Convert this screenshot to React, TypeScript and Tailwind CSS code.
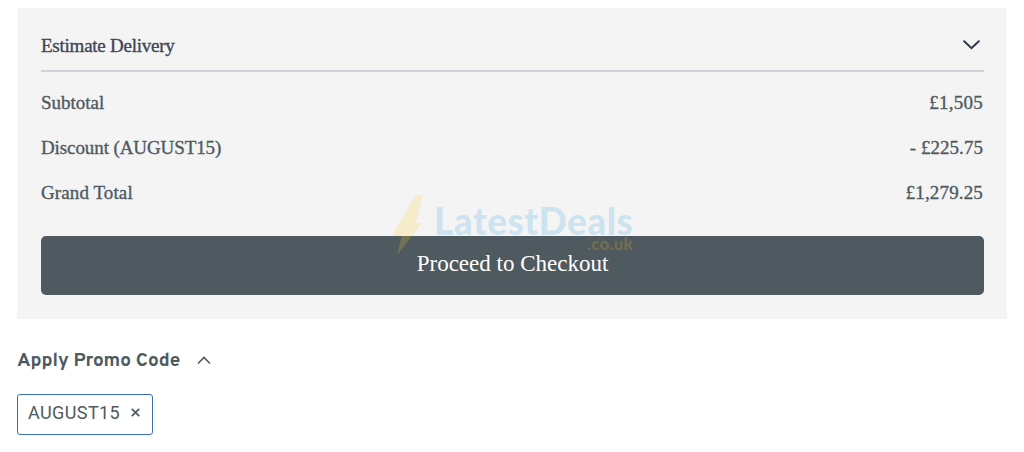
const serif = "font-['Liberation_Serif',serif] [-webkit-text-stroke:0.35px_currentColor]";

type SummaryRow = {
  label: string;
  amount: string;
  labelSpacing: string;
  amountSpacing: string;
};

const rows: SummaryRow[] = [
  { label: 'Subtotal', amount: '£1,505', labelSpacing: 'tracking-[0px]', amountSpacing: 'tracking-[0.25px]' },
  { label: 'Discount (AUGUST15)', amount: '- £225.75', labelSpacing: 'tracking-[-0.1px]', amountSpacing: 'tracking-[0.05px]' },
  { label: 'Grand Total', amount: '£1,279.25', labelSpacing: 'tracking-[0.1px]', amountSpacing: 'tracking-[0.15px]' },
];

export default function App() {
  return (
    <div className="h-[452px] w-[1024px] overflow-hidden bg-white pl-[17px] pt-2 text-[#4f5a60]">
      <section className="relative h-[311px] w-[990px] bg-[#f4f4f4] pl-6 pr-[23px]">
        <div className="flex h-16 items-center justify-between border-b-2 border-[#d2d3da] pt-3 text-[#3c4654]">
          <h2 className={`${serif} pt-px text-[19px] leading-6 tracking-[-0.24px]`}>
            <span>Estimate Delivery</span>
          </h2>
          <svg className="mr-1 h-[10px] w-[17px]" viewBox="0 0 17 10" fill="none" aria-hidden>
            <path d="M1.2 1.2 8.5 8.2 15.8 1.2" stroke="#2f3847" strokeWidth="2" strokeLinecap="round" />
          </svg>
        </div>

        <dl className={`${serif} pt-[9px] text-[19px]`}>
          {rows.map((row) => (
            <div key={row.label} className="flex h-[45px] items-center justify-between">
              <dt className={row.labelSpacing}>{row.label}</dt>
              <dd className={`${row.amountSpacing} pr-px`}>{row.amount}</dd>
            </div>
          ))}
        </dl>

        <button className="mt-5 flex h-[59px] w-full items-center justify-center rounded-[5px] bg-[#4f5a60] pb-[3px] font-['Liberation_Serif',serif] text-[23px] text-white">
          <span>Proceed to Checkout</span>
        </button>

        <Watermark />
      </section>

      <div className="flex h-20 items-center gap-[17px] font-[Overpass,Roboto,sans-serif]">
        <h3 className="pt-1 text-[19px] font-bold tracking-[0px]">
          <span>Apply Promo Code</span>
        </h3>
        <svg className="mt-[3px] h-[9px] w-[14px]" viewBox="0 0 14 9" fill="none" aria-hidden>
          <path d="M1 7.5 7 1.5 13 7.5" stroke="currentColor" strokeWidth="1.6" />
        </svg>
      </div>

      <div className="mt-[-5px] flex h-[41px] w-[136px] items-center gap-[11px] rounded-[3px] border border-[#3c6eb4] pb-1 pl-[10px] font-[Roboto,sans-serif]">
        <span className="text-[18px] tracking-[0.4px]">AUGUST15</span>
        <svg className="h-[9px] w-[9px]" viewBox="0 0 9 9" aria-label="Remove code">
          <path d="M.8.8 8.2 8.2M8.2.8.8 8.2" stroke="currentColor" strokeWidth="1.7" />
        </svg>
      </div>
    </div>
  );
}

/** Brand mark laid over the bottom of the summary panel. */
function Watermark() {
  return (
    <div className="pointer-events-none absolute left-[375px] top-[187px] h-[60px] w-[244px]" aria-hidden>
      <svg className="absolute left-0 top-0 h-[60px] w-[31px] opacity-20" viewBox="0 0 31 60">
        <path d="M23.5 0h7L24 28h6L5.5 59.5 9.5 41H0Z" fill="#ffcb2b" />
      </svg>
      <span className="absolute left-[42px] top-[4px] font-[Lato,sans-serif] text-[37px] font-black leading-[44px] tracking-[0.45px] text-[#269de0]/20">
        LatestDeals
      </span>
      <span className="absolute right-[3px] top-[39px] font-[Lato,sans-serif] text-[17px] font-black leading-5 tracking-[0.2px] text-[#e0ac18]/25">
        .co.uk
      </span>
    </div>
  );
}
